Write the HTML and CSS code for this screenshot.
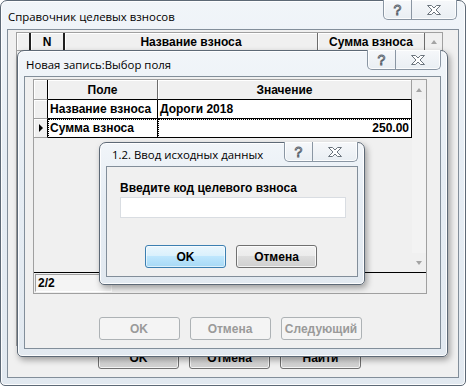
FILE: index.html
```html
<!DOCTYPE html>
<html lang="ru">
<head>
<meta charset="utf-8">
<link rel="stylesheet" href="styles.css">
</head>
<body>
<div class="win outer">
  <div class="title t-outer">Справочник целевых взносов</div>
  <div class="caps">
    <div class="cap help">?</div>
    <div class="cap close"><svg width="16" height="12" viewBox="0 0 16 12"><path d="M1.5 1.5h4l2.5 2.5 2.5-2.5h4l-4.5 4.5 4.5 4.5h-4l-2.5-2.5-2.5 2.5h-4l4.5-4.5z" fill="#fff" stroke="#6b747d" stroke-width="1"/></svg></div>
  </div>
  <div class="client c-outer">
    <div class="grid g-outer">
      <div class="ghead">
        <div class="gind"></div>
        <div class="gh w-n">N</div>
        <div class="gh w-name">Название взноса</div>
        <div class="gh w-sum">Сумма взноса</div>
        <div class="sbtop"><span class="arr up"></span></div>
      </div>
    </div>
    <div class="btnrow b-outer">
      <div class="btn">OK</div>
      <div class="btn">Отмена</div>
      <div class="btn">Найти</div>
    </div>
  </div>
</div>

<div class="win mid">
  <div class="title t-mid">Новая запись:Выбор поля</div>
  <div class="caps">
    <div class="cap help">?</div>
    <div class="cap close"><svg width="16" height="12" viewBox="0 0 16 12"><path d="M1.5 1.5h4l2.5 2.5 2.5-2.5h4l-4.5 4.5 4.5 4.5h-4l-2.5-2.5-2.5 2.5h-4l4.5-4.5z" fill="#fff" stroke="#6b747d" stroke-width="1"/></svg></div>
  </div>
  <div class="client c-mid">
    <div class="grid g-mid">
      <div class="gmain">
        <div class="gcols">
          <div class="ghead">
            <div class="gind"></div>
            <div class="gh w-pole">Поле</div>
            <div class="gh w-val">Значение</div>
          </div>
          <div class="grow">
            <div class="gind"></div>
            <div class="gc w-pole">Название взноса</div>
            <div class="gc w-val">Дороги 2018</div>
          </div>
          <div class="grow cur">
            <div class="gind"><span class="tri"></span></div>
            <div class="gc w-pole foc">Сумма взноса</div>
            <div class="gc w-val num foc">250.00</div>
          </div>
          <div class="gempty"></div>
        </div>
        <div class="vsb">
          <div class="sbbtn"><span class="arr up"></span></div>
          <div class="sbtrack"></div>
          <div class="sbbtn"><span class="arr down"></span></div>
        </div>
      </div>
      <div class="gfoot"><div class="gcount">2/2</div></div>
    </div>
    <div class="btnrow b-mid">
      <div class="btn dis">OK</div>
      <div class="btn dis">Отмена</div>
      <div class="btn dis">Следующий</div>
    </div>
  </div>
</div>

<div class="win dlg">
  <div class="title t-dlg">1.2. Ввод исходных данных</div>
  <div class="caps">
    <div class="cap help">?</div>
    <div class="cap close"><svg width="16" height="12" viewBox="0 0 16 12"><path d="M1.5 1.5h4l2.5 2.5 2.5-2.5h4l-4.5 4.5 4.5 4.5h-4l-2.5-2.5-2.5 2.5h-4l4.5-4.5z" fill="#fff" stroke="#6b747d" stroke-width="1"/></svg></div>
  </div>
  <div class="client c-dlg">
    <div class="lbl">Введите код целевого взноса</div>
    <div class="inp"></div>
    <div class="btnrow b-dlg">
      <div class="btn def">OK</div>
      <div class="btn">Отмена</div>
    </div>
  </div>
</div>
</body>
</html>
```

FILE: styles.css
```css
* { box-sizing: border-box; }
html, body { margin: 0; padding: 0; }
body {
  width: 467px;
  height: 386px;
  overflow: hidden;
  position: relative;
  background: #ffffff;
  font-family: "Liberation Sans", Arial, sans-serif;
}

/* ---------- windows ---------- */
.win {
  position: absolute;
  display: flex;
  flex-direction: column;
  border: 1px solid #5d6976;
  border-radius: 7px 7px 5px 5px;
  background: linear-gradient(180deg, #f1f5f9 0%, #e6edf4 40%, #e2e9f0 100%);
  box-shadow: inset 0 0 0 1px rgba(255,255,255,0.9);
}
.outer { left: 0; top: 0; width: 466px; height: 386px; }
.mid {
  left: 17px; top: 50px; width: 431px; height: 307px;
  box-shadow: inset 0 0 0 1px rgba(255,255,255,0.9), 2px 3px 6px rgba(0,0,0,0.35);
}
.dlg {
  left: 99px; top: 142px; width: 266px; height: 143px;
  box-shadow: inset 0 0 0 1px rgba(255,255,255,0.9), 2px 3px 6px rgba(0,0,0,0.35);
}

.title {
  display: flex;
  align-items: center;
  font-family: "Open Sans", "Noto Sans", sans-serif;
  font-size: 11.4px;
  color: #000;
  white-space: nowrap;
}
.t-outer { height: 28px; padding-left: 7px; padding-top: 2px; }
.t-mid { height: 25px; padding-left: 8px; padding-top: 1px; }
.t-dlg { height: 23px; padding-left: 12px; padding-top: 0px; }

.caps {
  position: absolute;
  top: -1px;
  right: 8px;
  height: 20px;
  display: flex;
  border: 1px solid #8a96a3;
  border-top: none;
  border-radius: 0 0 5px 5px;
  overflow: hidden;
  background: linear-gradient(180deg, #f6f8fa 0%, #e9eef3 100%);
  box-shadow: inset 0 0 0 1px rgba(255,255,255,0.8);
}
.mid .caps { right: 6px; }
.dlg .caps { right: 6px; }
.cap {
  display: flex;
  align-items: center;
  justify-content: center;
  height: 100%;
}
.cap.help {
  width: 28px;
  border-right: 1px solid #8a96a3;
  font-family: "Liberation Sans", sans-serif;
  font-weight: normal;
  font-size: 14px;
  color: #fff;
  -webkit-text-stroke: 0.9px #56606a;
}
.cap.close { width: 44px; }

.client {
  flex: 1;
  display: flex;
  flex-direction: column;
  margin: 0 6px 7px 6px;
  border: 1px solid #828e9a;
  background: #f0f0f0;
  font-weight: bold;
  font-size: 12px;
  color: #000;
}

/* ---------- outer grid ---------- */
.c-outer { padding: 2px 15px 0 8px; }
.g-outer { flex: 1; border: 1px solid #a0a0a0; background: #f0f0f0; }
.ghead { display: flex; height: 18px; }
.gind {
  width: 14px;
  flex: none;
  background: #f0f0f0;
  border-right: 1px solid #000;
  border-bottom: 1px solid #a0a0a0;
  box-shadow: inset 1px 1px 0 #fff;
  display: flex;
  align-items: center;
  justify-content: center;
}
.gh {
  display: flex;
  align-items: center;
  justify-content: center;
  flex: none;
  background: #f0f0f0;
  border-right: 1px solid #6c6c6c;
  border-bottom: 1px solid #000;
  box-shadow: inset 1px 1px 0 #fff;
  white-space: nowrap;
}
.g-outer .gind { width: 14px; border-right: 2px solid #202020; }
.w-n { width: 34px; border-right: 2px solid #202020; }
.w-name { width: 253px; }
.w-sum { width: 107px; }
.sbtop {
  flex: 1;
  display: flex;
  align-items: center;
  justify-content: center;
  background: #f0f0f0;
}
.arr { width: 0; height: 0; border-left: 3.5px solid transparent; border-right: 3.5px solid transparent; }
.arr.up { border-bottom: 4px solid #a3a3a3; }
.arr.down { border-top: 4px solid #a3a3a3; }

.b-outer { padding-bottom: 8px; }

/* ---------- buttons ---------- */
.btnrow {
  display: flex;
  justify-content: center;
  gap: 10px;
}
.btn {
  width: 81px;
  height: 23px;
  display: flex;
  align-items: center;
  justify-content: center;
  border: 1px solid #707070;
  border-radius: 3px;
  background: linear-gradient(180deg, #f2f2f2 0%, #ebebeb 49%, #dddddd 50%, #cfcfcf 100%);
  box-shadow: inset 0 0 0 1px rgba(255,255,255,0.75);
  font-weight: bold;
  font-size: 12px;
  color: #000;
}
.btn.dis {
  border-color: #adb2b5;
  background: #f4f4f4;
  box-shadow: none;
  color: #9a9a9a;
}
.btn.def {
  border-color: #3c7fb1;
  background: linear-gradient(180deg, #eaf6fd 0%, #d9f0fc 49%, #bee6fd 50%, #a7d9f5 100%);
  box-shadow: inset 0 0 0 1px rgba(255,255,255,0.6);
}

/* ---------- middle grid ---------- */
.c-mid { padding: 2px 13px 0 8px; }
.g-mid {
  height: 215px;
  display: flex;
  flex-direction: column;
  border: 1px solid #a0a0a0;
  background: #f0f0f0;
}
.gmain { flex: 1; display: flex; border-bottom: 1px solid #000; }
.gcols { flex: 1; display: flex; flex-direction: column; }
.g-mid .ghead { height: 20px; }
.w-pole { width: 110px; }
.w-val { width: 254px; }
.g-mid .gh.w-val { border-right: 1px solid #a0a0a0; }
.grow { display: flex; height: 19px; }
.grow .gind { border-bottom: 1px solid #a0a0a0; }
.gc {
  flex: none;
  display: flex;
  align-items: center;
  padding: 0 2px;
  background: #fff;
  border-right: 1px solid #000;
  border-bottom: 1px solid #000;
  white-space: nowrap;
}
.gc.num { justify-content: flex-end; }
.gc.foc { outline: 1px dotted #000; outline-offset: -1px; }
.tri { width: 0; height: 0; border-top: 4px solid transparent; border-bottom: 4px solid transparent; border-left: 4px solid #000; }
.gempty { flex: 1; }
.vsb { width: 16px; display: flex; flex-direction: column; background: #f0f0f0; }
.sbbtn { height: 19px; display: flex; align-items: center; justify-content: center; }
.sbtrack { flex: 1; background: #f3f3f3; }
.gfoot { height: 20px; display: flex; align-items: stretch; padding: 1px; }
.gcount {
  width: 77px;
  display: flex;
  align-items: center;
  padding-left: 2px;
  background: #f4f4f4;
  border-top: 1px solid #a0a0a0;
  border-left: 1px solid #a0a0a0;
  border-right: 1px solid #fff;
  border-bottom: 1px solid #fff;
}
.b-mid { margin-top: auto; padding-bottom: 8px; }

/* ---------- dialog ---------- */
.c-dlg { padding: 14px 0 0 13px; }
.lbl { height: 14px; display: flex; align-items: center; white-space: nowrap; }
.inp {
  margin-top: 2px;
  width: 226px;
  height: 21px;
  background: #fff;
  border: 1px solid #d9dde2;
}
.b-dlg { margin-top: auto; padding-bottom: 8px; justify-content: flex-start; padding-left: 25px; }
```
